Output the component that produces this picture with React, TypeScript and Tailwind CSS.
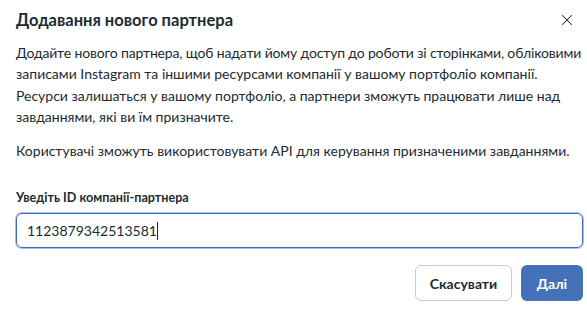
import { X } from 'lucide-react'

export default function App() {
  return (
    <div
      className="w-[587px] h-[312px] bg-white text-[#1c2b33] pl-4 pr-1 pt-2 overflow-hidden"
      style={{ fontFamily: 'Lato, Roboto, sans-serif' }}
    >
      <div className="flex items-center justify-between h-6">
        <h1 className="text-[16.5px] font-bold leading-6">Додавання нового партнера</h1>
        <button className="w-5 h-5 flex items-center justify-center mr-[6px] text-[#1c2b33]">
          <X className="w-[18px] h-[18px]" strokeWidth={1.4} />
        </button>
      </div>
      <div className="mt-[10px] text-[14px] leading-[21.3px] whitespace-nowrap">
        <p>
          <span className="tracking-[-0.16px]">
            Додайте нового партнера, щоб надати йому доступ до роботи зі сторінками, обліковими
          </span>
          <br />
          записами Instagram та іншими ресурсами компанії у вашому портфоліо компанії.
          <br />
          Ресурси залишаться у вашому портфоліо, а партнери зможуть працювати лише над
          <br />
          завданнями, які ви їм призначите.
        </p>
        <p className="mt-[13px]">
          Користувачі зможуть використовувати API для керування призначеними завданнями.
        </p>
      </div>
      <label className="block mt-[27px] text-[12.6px] font-bold leading-5">
        Уведіть ID компанії-партнера
      </label>
      <div className="mt-[5px] h-[35px] rounded-md border border-[#3e6fbe] shadow-[0_0_0_1px_#a9c2e8] flex items-center px-[10px] text-[14px]">
        <span>1123879342513581</span>
        <span className="w-px h-[18px] bg-[#1c2b33]" />
      </div>
      <div className="mt-[17px] flex justify-end gap-[9px]">
        <button className="h-9 w-[97px] rounded-md border border-[#c4c9cf] bg-white text-[14px] font-bold">
          Скасувати
        </button>
        <button className="h-9 w-[62px] rounded-md bg-[#4472b9] text-white text-[14px] font-bold">
          Далі
        </button>
      </div>
    </div>
  )
}
